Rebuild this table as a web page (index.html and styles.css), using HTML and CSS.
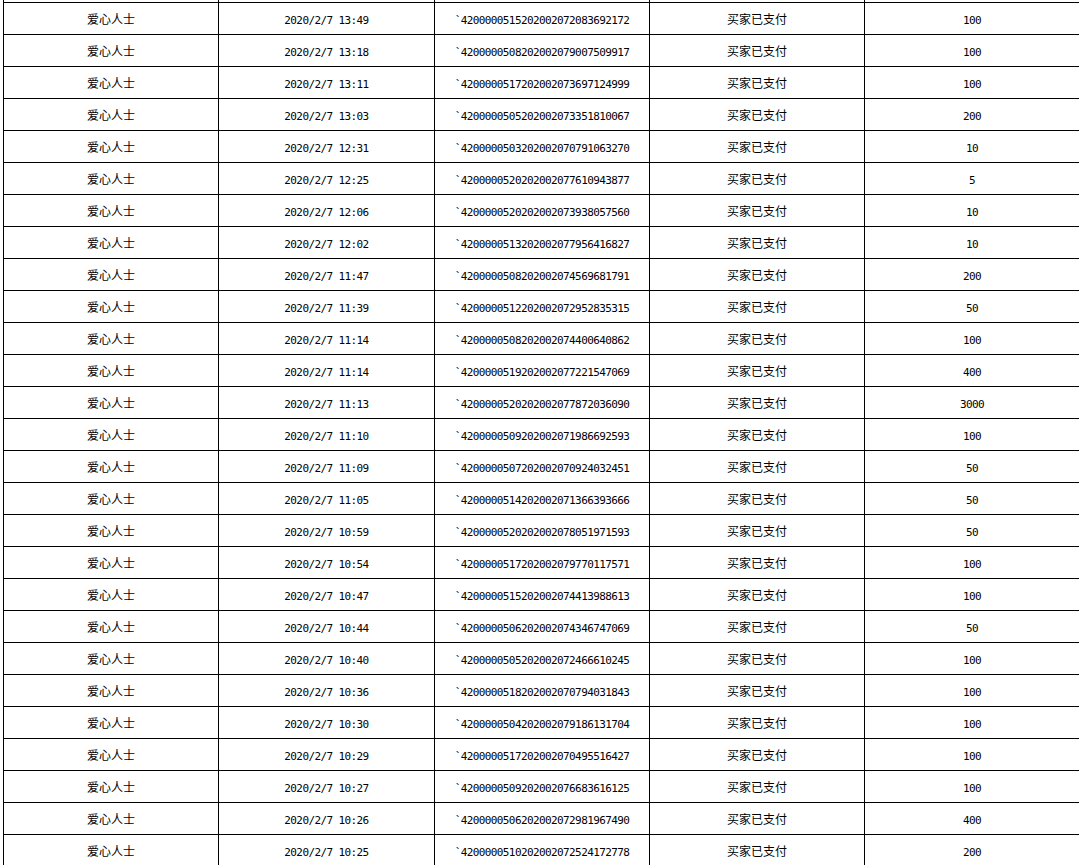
FILE: index.html
```html
<!DOCTYPE html>
<html lang="zh-CN">
  <head>
    <meta charset="utf-8">
    <title>捐款记录</title>
    <link rel="stylesheet" href="styles.css">
  </head>
  <body>
    <table class="pay_log">
      <colgroup>
        <col class="col_name">
        <col class="col_time">
        <col class="col_order">
        <col class="col_state">
        <col class="col_amount">
      </colgroup>
      <tbody id="log_body">
        <tr class="row_cut"><td></td><td></td><td></td><td></td><td></td></tr>
      </tbody>
    </table>
    <script type="text/javascript">
      let log_body = document.querySelector('#log_body')

      let records = [
        ['13:49', '4200000515202002072083692172', '100'],
        ['13:18', '4200000508202002079007509917', '100'],
        ['13:11', '4200000517202002073697124999', '100'],
        ['13:03', '4200000505202002073351810067', '200'],
        ['12:31', '4200000503202002070791063270', '10'],
        ['12:25', '4200000520202002077610943877', '5'],
        ['12:06', '4200000520202002073938057560', '10'],
        ['12:02', '4200000513202002077956416827', '10'],
        ['11:47', '4200000508202002074569681791', '200'],
        ['11:39', '4200000512202002072952835315', '50'],
        ['11:14', '4200000508202002074400640862', '100'],
        ['11:14', '4200000519202002077221547069', '400'],
        ['11:13', '4200000520202002077872036090', '3000'],
        ['11:10', '4200000509202002071986692593', '100'],
        ['11:09', '4200000507202002070924032451', '50'],
        ['11:05', '4200000514202002071366393666', '50'],
        ['10:59', '4200000520202002078051971593', '50'],
        ['10:54', '4200000517202002079770117571', '100'],
        ['10:47', '4200000515202002074413988613', '100'],
        ['10:44', '4200000506202002074346747069', '50'],
        ['10:40', '4200000505202002072466610245', '100'],
        ['10:36', '4200000518202002070794031843', '100'],
        ['10:30', '4200000504202002079186131704', '100'],
        ['10:29', '4200000517202002070495516427', '100'],
        ['10:27', '4200000509202002076683616125', '100'],
        ['10:26', '4200000506202002072981967490', '400'],
        ['10:25', '4200000510202002072524172778', '200']
      ]

      function add_cell(row, text, cls) {
        let td = document.createElement('td')
        td.className = cls
        td.innerText = text
        row.appendChild(td)
      }

      for (let rec of records) {
        let tr = document.createElement('tr')
        add_cell(tr, '爱心人士', 'cn_text')
        add_cell(tr, '2020/2/7 ' + rec[0], 'num_text')
        add_cell(tr, '`' + rec[1], 'num_text')
        add_cell(tr, '买家已支付', 'cn_text')
        add_cell(tr, rec[2], 'num_text')
        log_body.appendChild(tr)
      }
    </script>
  </body>
</html>
```

FILE: styles.css
```css
html, body {
  margin:0;
  padding:0;
  overflow:hidden;
  background-color:#fff;
}
body {
  color:#000;
}
.pay_log {
  border-collapse:collapse;
  table-layout:fixed;
  width:1077px;
  margin:-30px 0 0 3px;
}
.col_name { width:215px; }
.col_time { width:216px; }
.col_order { width:215px; }
.col_state { width:215px; }
.col_amount { width:215px; }

.pay_log td {
  border:1px solid #000;
  height:31px;
  padding:0;
  text-align:center;
  vertical-align:middle;
  white-space:nowrap;
}
.cn_text {
  font-family:"Noto Sans CJK SC", sans-serif;
  font-size:12px;
}
.pay_log td.num_text {
  font-family:"DejaVu Sans Mono", monospace;
  font-size:11px;
  letter-spacing:-0.6px;
  white-space:pre;
  height:27px;
  padding-top:4px;
}
```
